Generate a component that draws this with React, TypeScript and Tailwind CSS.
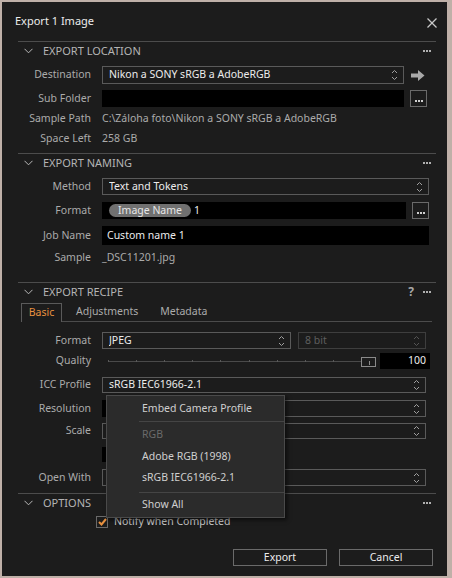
import React from 'react';

const font = { fontFamily: '"Noto Sans", "Liberation Sans", sans-serif' };

function UpDown({ dim = false }: { dim?: boolean }) {
    return (
        <svg width="7" height="12" viewBox="0 0 7 12" className="shrink-0">
            <polyline points="1,4 3.5,1.5 6,4" fill="none" stroke={dim ? '#555' : '#a0a0a0'} strokeWidth="1" />
            <polyline points="1,8 3.5,10.5 6,8" fill="none" stroke={dim ? '#555' : '#a0a0a0'} strokeWidth="1" />
        </svg>
    );
}

function Dots({ color = '#b0b0b0' }: { color?: string }) {
    return (
        <svg width="8" height="3" viewBox="0 0 8 3">
            <rect x="0" y="0" width="2" height="2" fill={color} />
            <rect x="3" y="0" width="2" height="2" fill={color} />
            <rect x="6" y="0" width="2" height="2" fill={color} />
        </svg>
    );
}

function Chevron() {
    return (
        <svg width="9" height="6" viewBox="0 0 9 6" className="shrink-0">
            <polyline points="0.5,0.8 4.5,4.8 8.5,0.8" fill="none" stroke="#b8b8b8" strokeWidth="1" />
        </svg>
    );
}

function SectionHeader({ title, help = false }: { title: string; help?: boolean }) {
    return (
        <div className="ml-[16px] mr-[11px] h-[19px] border-t border-[#4c4c4c] flex items-center">
            <div className="w-[25px] pl-[6px] flex items-center">
                <Chevron />
            </div>
            <span className="text-[11px] text-[#b4b4b4]">{title}</span>
            <div className="ml-auto flex items-center gap-[9px] pr-[5px]">
                {help && <span className="text-[12px] font-bold text-[#a8a8a8] leading-none">?</span>}
                <Dots />
            </div>
        </div>
    );
}

function Row({ label, className = '', children }: { label: string; className?: string; children?: React.ReactNode }) {
    return (
        <div className={`flex items-center ${className}`}>
            <div className="w-[89px] shrink-0 text-right text-[10.5px] text-[#ababab]">{label}</div>
            <div className="ml-[11px] flex-1 flex items-center h-full min-w-0">{children}</div>
        </div>
    );
}

function Select({ value, className = '', dim = false }: { value: string; className?: string; dim?: boolean }) {
    return (
        <div className={`h-full border flex items-center pl-[6px] pr-[5px] ${dim ? 'border-[#3e3e3e]' : 'border-[#5a5a5a]'} ${className}`}>
            <span className={`text-[10.5px] flex-1 truncate ${dim ? 'text-[#5e5e5e]' : 'text-[#ececec]'}`}>{value}</span>
            <UpDown dim={dim} />
        </div>
    );
}

function MoreButton() {
    return (
        <div className="ml-[6px] w-[17px] h-[17px] border border-[#6a6a6a] flex items-end justify-center pb-[3px] shrink-0">
            <Dots color="#d0d0d0" />
        </div>
    );
}

export default function App() {
    const ticks = [0, 1, 2, 3, 4, 5, 6, 7, 8, 9];

    return (
        <div className="w-[452px] h-[578px] bg-[#bfb0a8] pt-[2px] pl-[2px] overflow-hidden" style={font}>
            <div className="relative w-[445px] h-[574px] bg-[#1c1c1c] flex flex-col">
                {/* Title */}
                <div className="h-[39px] flex items-center pl-[13px] pr-[9px]">
                    <span className="text-[11px] text-[#ececec]">Export 1 Image</span>
                    <svg width="10" height="10" viewBox="0 0 10 10" className="ml-auto mt-[3px] mr-[1px]">
                        <line x1="0.5" y1="0.5" x2="9.5" y2="9.5" stroke="#c8c8c8" strokeWidth="1.2" />
                        <line x1="9.5" y1="0.5" x2="0.5" y2="9.5" stroke="#c8c8c8" strokeWidth="1.2" />
                    </svg>
                </div>

                {/* Export location */}
                <SectionHeader title="EXPORT LOCATION" />
                <Row label="Destination" className="mt-[6px] h-[18px]">
                    <Select value="Nikon a SONY sRGB a AdobeRGB" className="w-[302px]" />
                    <svg width="14" height="11" viewBox="0 0 14 11" className="ml-[7px]">
                        <path d="M0 3.5 H7 V0 L13.5 5.5 L7 11 V7.5 H0 Z" fill="#a8a8a8" />
                    </svg>
                </Row>
                <Row label="Sub Folder" className="mt-[6px] h-[17px]">
                    <div className="w-[302px] h-full bg-black" />
                    <MoreButton />
                </Row>
                <Row label="Sample Path" className="mt-[3px] h-[17px]">
                    <span className="text-[10.5px] text-[#ababab]">C:\Záloha foto\Nikon a SONY sRGB a AdobeRGB</span>
                </Row>
                <Row label="Space Left" className="mt-[3px] h-[17px]">
                    <span className="text-[10.5px] text-[#ababab]">258 GB</span>
                </Row>

                {/* Export naming */}
                <div className="mt-[6px]" />
                <SectionHeader title="EXPORT NAMING" />
                <Row label="Method" className="mt-[6px] h-[17px]">
                    <Select value="Text and Tokens" className="w-[327px]" />
                </Row>
                <Row label="Format" className="mt-[7px] h-[17px]">
                    <div className="w-[304px] h-full bg-black flex items-center pl-[7px]">
                        <span className="h-[13px] px-[9px] rounded-full bg-[#707070] text-[10.5px] leading-[13px] text-[#e6e6e6]">Image Name</span>
                        <span className="ml-[3px] text-[10.5px] text-[#ececec]">1</span>
                    </div>
                    <MoreButton />
                </Row>
                <Row label="Job Name" className="mt-[7px] h-[19px]">
                    <div className="w-[327px] h-full bg-black flex items-center pl-[5px]">
                        <span className="text-[10.5px] text-[#ececec]">Custom name 1</span>
                    </div>
                </Row>
                <Row label="Sample" className="mt-[5px] h-[16px]">
                    <span className="text-[10.5px] text-[#ababab]">_DSC11201.jpg</span>
                </Row>

                {/* Export recipe */}
                <div className="mt-[16px]" />
                <SectionHeader title="EXPORT RECIPE" help />
                <div className="mt-[2px] ml-[19px] mr-[15px] h-[19px] flex items-end">
                    <div className="h-[19px] w-[41px] border border-b-0 border-[#5a5a5a] flex items-center justify-center">
                        <span className="text-[10.5px] text-[#e8913f]">Basic</span>
                    </div>
                    <div className="flex-1 h-[19px] border-b border-[#4c4c4c] flex items-center pl-[14px] gap-[22px]">
                        <span className="text-[10.5px] text-[#ababab]">Adjustments</span>
                        <span className="text-[10.5px] text-[#ababab]">Metadata</span>
                    </div>
                </div>
                <Row label="Format" className="mt-[10px] h-[17px]">
                    <Select value="JPEG" className="w-[189px]" />
                    <Select value="8 bit" dim className="ml-[7px] w-[128px]" />
                </Row>
                <Row label="Quality" className="mt-[4px] h-[16px]">
                    <div className="w-[274px] h-full flex items-center pl-[6px]">
                        <div className="relative flex-1 h-full flex items-center">
                            <div className="w-full border-t border-[#4a4a4a]" />
                            <div className="absolute inset-x-0 top-1/2 flex justify-between pr-[14px]">
                                {ticks.map(t => (
                                    <div key={t} className="w-px h-[2px] -mt-[1px] bg-[#5a5a5a]" />
                                ))}
                            </div>
                            <div className="absolute right-0 top-[4px] w-[15px] h-[10px] border border-[#8a8a8a] bg-[#1c1c1c] flex items-end justify-end pr-[5px]">
                                <div className="w-px h-[4px] bg-[#8a8a8a] mb-[1px]" />
                            </div>
                        </div>
                    </div>
                    <div className="ml-[4px] w-[50px] h-full bg-black flex items-center justify-end pr-[4px]">
                        <span className="text-[10.5px] text-[#ececec]">100</span>
                    </div>
                </Row>
                <Row label="ICC Profile" className="mt-[8px] h-[16px]">
                    <Select value="sRGB IEC61966-2.1" className="w-[324px]" />
                </Row>
                <Row label="Resolution" className="mt-[7px] h-[17px]">
                    <div className="w-[60px] h-full bg-black" />
                    <Select value="" className="ml-[6px] w-[258px]" />
                </Row>
                <Row label="Scale" className="mt-[6px] h-[16px]">
                    <Select value="" className="w-[324px]" />
                </Row>
                <Row label="" className="mt-[8px] h-[15px]">
                    <div className="w-[60px] h-full bg-black" />
                </Row>
                <Row label="Open With" className="mt-[7px] h-[17px]">
                    <Select value="" className="w-[324px]" />
                </Row>

                {/* Options */}
                <div className="mt-[7px]" />
                <SectionHeader title="OPTIONS" />
                <div className="mt-[3px] h-[14px] flex items-center pl-[94px]">
                    <div className="w-[12px] h-[12px] border border-[#6a6a6a] flex items-center justify-center">
                        <svg width="9" height="8" viewBox="0 0 9 8">
                            <polyline points="1,4 3.5,6.5 8,1" fill="none" stroke="#e8913f" strokeWidth="2" />
                        </svg>
                    </div>
                    <span className="ml-[6px] text-[10.5px] text-[#c8c8c8]">Notify when Completed</span>
                </div>

                {/* Buttons */}
                <div className="mt-[20px] flex justify-end gap-[12px] pr-[14px]">
                    <button className="w-[94px] h-[17px] border border-[#6a6a6a] text-[10.5px] leading-none text-[#ececec]">Export</button>
                    <button className="w-[94px] h-[17px] border border-[#6a6a6a] text-[10.5px] leading-none text-[#ececec]">Cancel</button>
                </div>

                {/* ICC profile dropdown menu */}
                <div className="absolute left-[104px] top-[393px] w-[179px] h-[123px] bg-[#2b2b2b] border border-[#4a4a4a] shadow-[2px_2px_4px_rgba(0,0,0,0.6)] flex flex-col">
                    <div className="h-[25px] flex items-center pl-[35px] text-[10.5px] text-[#cfcfcf]">Embed Camera Profile</div>
                    <div className="ml-[32px] border-t border-[#454545]" />
                    <div className="h-[22px] mt-[2px] flex items-center pl-[35px] text-[10.5px] text-[#6a6a6a]">RGB</div>
                    <div className="h-[22px] flex items-center pl-[35px] text-[10.5px] text-[#cfcfcf]">Adobe RGB (1998)</div>
                    <div className="h-[22px] flex items-center pl-[35px] text-[10.5px] text-[#cfcfcf]">sRGB IEC61966-2.1</div>
                    <div className="ml-[32px] mt-[3px] border-t border-[#454545]" />
                    <div className="h-[24px] flex items-center pl-[35px] text-[10.5px] text-[#cfcfcf]">Show All</div>
                </div>
            </div>
        </div>
    );
}
